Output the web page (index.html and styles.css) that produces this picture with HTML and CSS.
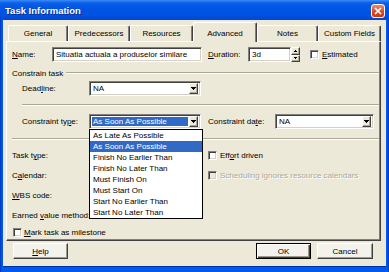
FILE: index.html
```html
<!DOCTYPE html>
<html lang="en">
<head>
    <meta charset="UTF-8">
    <meta name="viewport" content="width=device-width, initial-scale=1.0">
    <title>Task Information</title>

    <link rel="stylesheet" href="styles.css">
</head>
<body>

<div class="window">
    <div class="titlebar">
        <span class="title">Task Information</span>
        <span class="close">
            <svg width="8" height="8" viewBox="0 0 8 8"><path d="M1 1 L7 7 M7 1 L1 7" stroke="#fff" stroke-width="1.7" fill="none"/></svg>
        </span>
    </div>

    <div class="client">
        <div class="tabs">
            <div class="tab tab-general">General</div>
            <div class="tab tab-pred">Predecessors</div>
            <div class="tab tab-res">Resources</div>
            <div class="tab tab-adv active">Advanced</div>
            <div class="tab tab-notes">Notes</div>
            <div class="tab tab-custom">Custom Fields</div>
        </div>

        <div class="panel">
            <div class="row row-name">
                <span class="label label-name"><u>N</u>ame:</span>
                <span class="field field-name">Situatia actuala a produselor similare</span>
                <span class="label label-dur"><u>D</u>uration:</span>
                <span class="field field-dur">3d</span>
                <span class="spin">
                    <span class="spin-btn"><svg width="3" height="2" viewBox="0 0 3 2"><path d="M1 0h1v1h1v1h-3v-1h1z"/></svg></span>
                    <span class="spin-btn"><svg width="3" height="2" viewBox="0 0 3 2"><path d="M0 0h3v1h-1v1h-1v-1h-1z"/></svg></span>
                </span>
                <span class="check check-est"></span>
                <span class="check-text"><u>E</u>stimated</span>
            </div>

            <div class="group-title">
                <span>Constrain task</span>
                <span class="group-line"></span>
            </div>

            <div class="row row-indent row-deadline">
                <span class="label label-wide">Dead<u>l</u>ine:</span>
                <span class="field combo combo-deadline">
                    <span class="combo-text">NA</span>
                    <span class="drop"><svg width="5" height="3" viewBox="0 0 5 3"><path d="M0 0h5v1h-1v1h-1v1h-1v-1h-1v-1h-1z"/></svg></span>
                </span>
            </div>

            <div class="sep sep-inner"></div>

            <div class="row row-indent row-ctype">
                <span class="label label-wide">Constraint ty<u>p</u>e:</span>
                <span class="field combo combo-ctype">
                    <span class="combo-text selected-text">As Soon As Possible</span>
                    <span class="drop"><svg width="5" height="3" viewBox="0 0 5 3"><path d="M0 0h5v1h-1v1h-1v1h-1v-1h-1v-1h-1z"/></svg></span>

                    <span class="list">
                        <span class="list-item">As Late As Possible</span>
                        <span class="list-item selected">As Soon As Possible</span>
                        <span class="list-item">Finish No Earlier Than</span>
                        <span class="list-item">Finish No Later Than</span>
                        <span class="list-item">Must Finish On</span>
                        <span class="list-item">Must Start On</span>
                        <span class="list-item">Start No Earlier Than</span>
                        <span class="list-item">Start No Later Than</span>
                    </span>
                </span>
                <span class="label label-wide label-cdate">Constraint da<u>t</u>e:</span>
                <span class="field combo combo-cdate">
                    <span class="combo-text">NA</span>
                    <span class="drop"><svg width="5" height="3" viewBox="0 0 5 3"><path d="M0 0h5v1h-1v1h-1v1h-1v-1h-1v-1h-1z"/></svg></span>
                </span>
            </div>

            <div class="sep sep-full"></div>

            <div class="task-rows">
                <div class="row row-task">
                    <span class="label label-task">Task t<u>y</u>pe:</span>
                    <span class="check"></span>
                    <span class="check-text">Eff<u>o</u>rt driven</span>
                </div>
                <div class="row row-task">
                    <span class="label label-task">C<u>a</u>lendar:</span>
                    <span class="check disabled"></span>
                    <span class="check-text disabled-text">Scheduling ignores resource calendars</span>
                </div>
                <div class="row row-task">
                    <span class="label label-task"><u>W</u>BS code:</span>
                </div>
                <div class="row row-task">
                    <span class="label label-task">Earned <u>v</u>alue method:</span>
                </div>
            </div>

            <div class="row row-milestone">
                <span class="check"></span>
                <span class="check-text"><u>M</u>ark task as milestone</span>
            </div>
        </div>

        <div class="buttons">
            <span class="btn"><span><u>H</u>elp</span></span>
            <span class="btn-group">
                <span class="btn default">OK</span>
                <span class="btn btn-cancel">Cancel</span>
            </span>
        </div>
    </div>
</div>

</body>
</html>
```

FILE: styles.css
```css
* {
    box-sizing: border-box;
}
body {
    margin: 0;
    font-family: "Liberation Sans", Arial, sans-serif;
    font-size: 8px;
    color: #000;
    background-color: #0054e3;
    overflow: hidden;
}
u {
    text-decoration-thickness: 1px;
    text-underline-offset: 1px;
}

/* window frame */
.window {
    width: 389px;
    height: 272px;
    display: flex;
    flex-direction: column;
    background: linear-gradient(to right, #0036b8 0, #0058ee 2px, #0058ee 387px, #0036b8 389px);
}
.titlebar {
    height: 20px;
    display: flex;
    justify-content: space-between;
    align-items: flex-start;
    padding: 0 4px 0 5px;
    background: linear-gradient(to bottom, #3a8cf6 0, #0c5fe9 3px, #0055e5 8px, #0052e0 15px, #0046d2 20px);
}
.title {
    margin-top: 5px;
    line-height: 12px;
    font-size: 9.5px;
    font-weight: bold;
    color: #fff;
    text-shadow: 1px 1px 0 #0a2a8c;
}
.close {
    margin-top: 4px;
    width: 14px;
    height: 14px;
    display: flex;
    align-items: center;
    justify-content: center;
    border: 1px solid #fff;
    border-radius: 3px;
    background: linear-gradient(to bottom, #ec8a6a, #d9461e 60%, #c93a14);
}
.client {
    flex: 1;
    margin: 0 3px 6px 3px;
    background-color: #ece9d8;
    box-shadow: 0 1px 0 #0030a8;
    display: flex;
    flex-direction: column;
}

/* tabs */
.tabs {
    height: 18px;
    margin-top: 3px;
    padding-left: 5px;
    display: flex;
    align-items: flex-end;
}
.tab {
    height: 16px;
    display: flex;
    align-items: center;
    justify-content: center;
    border-top: 1px solid #fff;
    border-left: 1px solid #fff;
    border-right: 1px solid #404040;
    box-shadow: inset -1px 0 0 #808080;
    border-radius: 2px 2px 0 0;
}
.tab.active {
    height: 20px;
    padding-top: 2px;
    margin-bottom: -1px;
    background-color: #ece9d8;
    position: relative;
    z-index: 1;
}
.tab-general { width: 60px; }
.tab-pred { width: 62px; }
.tab-res { width: 63px; }
.tab-adv { width: 64px; }
.tab-notes { width: 61px; }
.tab-custom { width: 63px; }

/* tab page */
.panel {
    width: 375px;
    height: 200px;
    margin-left: 3px;
    padding: 5px 1px 0 5px;
    border-top: 1px solid #fff;
    border-left: 1px solid #fff;
    border-right: 1px solid #404040;
    border-bottom: 1px solid #404040;
    box-shadow: inset -1px -1px 0 #808080;
}
.row {
    display: flex;
    align-items: center;
    height: 15px;
}
.row-indent {
    padding-left: 10px;
}
.label {
    white-space: nowrap;
}
.label-name { width: 40px; }
.label-dur { width: 40px; margin-left: 6px; }
.label-wide { width: 67px; }
.label-cdate { margin-left: 7px; }
.label-task { width: 196px; }

.field {
    height: 15px;
    background-color: #fff;
    border: 1px solid;
    border-color: #808080 #fff #fff #808080;
    box-shadow: inset 1px 1px 0 #404040, inset -1px -1px 0 #d4d0c8;
    padding: 0 3px;
    display: flex;
    align-items: center;
    white-space: nowrap;
}
.field-name { width: 150px; }
.field-dur { width: 43px; }
.spin {
    width: 9px;
    height: 15px;
    display: flex;
    flex-direction: column;
}
.spin-btn, .drop {
    flex: 1;
    display: flex;
    align-items: center;
    justify-content: center;
    background-color: #ece9d8;
    border: 1px solid;
    border-color: #fff #404040 #404040 #fff;
    box-shadow: inset -1px -1px 0 #aca899;
}
.check {
    width: 9px;
    height: 9px;
    flex: none;
    background-color: #fff;
    border: 1px solid;
    border-color: #808080 #fff #fff #808080;
    box-shadow: inset 1px 1px 0 #404040, inset -1px -1px 0 #d4d0c8;
}
.check.disabled {
    background-color: #ece9d8;
}
.check-est {
    margin-left: 10px;
}
.check-text {
    margin-left: 3px;
    white-space: nowrap;
}
.disabled-text {
    color: #aca899;
    text-shadow: 1px 1px 0 #fff;
}

/* combo boxes */
.combo {
    position: relative;
    justify-content: space-between;
    padding: 2px 2px 2px 2px;
}
.combo-text {
    padding-left: 1px;
    flex: 1;
    height: 100%;
    display: flex;
    align-items: center;
}
.combo .drop {
    flex: none;
    width: 9px;
    height: 11px;
}
.combo-deadline { width: 112px; }
.combo-ctype { width: 112px; }
.combo-cdate { width: 99px; }
.selected-text {
    background-color: #316ac5;
    color: #fff;
    margin-right: 1px;
}
.list {
    position: absolute;
    left: -1px;
    top: 14px;
    width: 114px;
    height: 90px;
    background-color: #fff;
    border: 1px solid #000;
    z-index: 2;
    display: flex;
    flex-direction: column;
}
.list-item {
    height: 11px;
    line-height: 11px;
    padding-left: 3px;
}
.list-item.selected {
    background-color: #316ac5;
    color: #fff;
}

/* group header and separators */
.group-title {
    display: flex;
    align-items: center;
    height: 10px;
    margin-top: 6px;
}
.group-line {
    flex: 1;
    margin-left: 3px;
    border-top: 1px solid #aca899;
    border-bottom: 1px solid #fff;
}
.row-deadline { margin-top: 3px; }
.sep {
    height: 2px;
    border-top: 1px solid #aca899;
    border-bottom: 1px solid #fff;
}
.sep-inner {
    margin: 8px 0 0 10px;
}
.row-ctype { margin-top: 8px; }
.sep-full { margin-top: 9px; }
.task-rows {
    margin-top: 8px;
    display: flex;
    flex-direction: column;
    gap: 5px;
}
.row-milestone {
    height: 10px;
    margin-top: 4px;
    padding-left: 1px;
}
.row-milestone .check-text { margin-left: 2px; }

/* dialog buttons */
.buttons {
    margin-top: 2px;
    height: 16px;
    display: flex;
    justify-content: space-between;
    padding: 0 13px 0 10px;
}
.btn-group {
    display: flex;
    gap: 6px;
}
.btn {
    width: 55px;
    height: 16px;
    display: flex;
    align-items: center;
    justify-content: center;
    background-color: #f3f2ec;
    border: 1px solid;
    border-color: #fff #404040 #404040 #fff;
    box-shadow: inset -1px -1px 0 #9d9a8c;
}
.btn.default {
    border-color: #000;
    box-shadow: inset 1px 1px 0 #fff, inset -1px -1px 0 #404040, inset -2px -2px 0 #9d9a8c;
}
.btn-cancel { width: 56px; }
```
